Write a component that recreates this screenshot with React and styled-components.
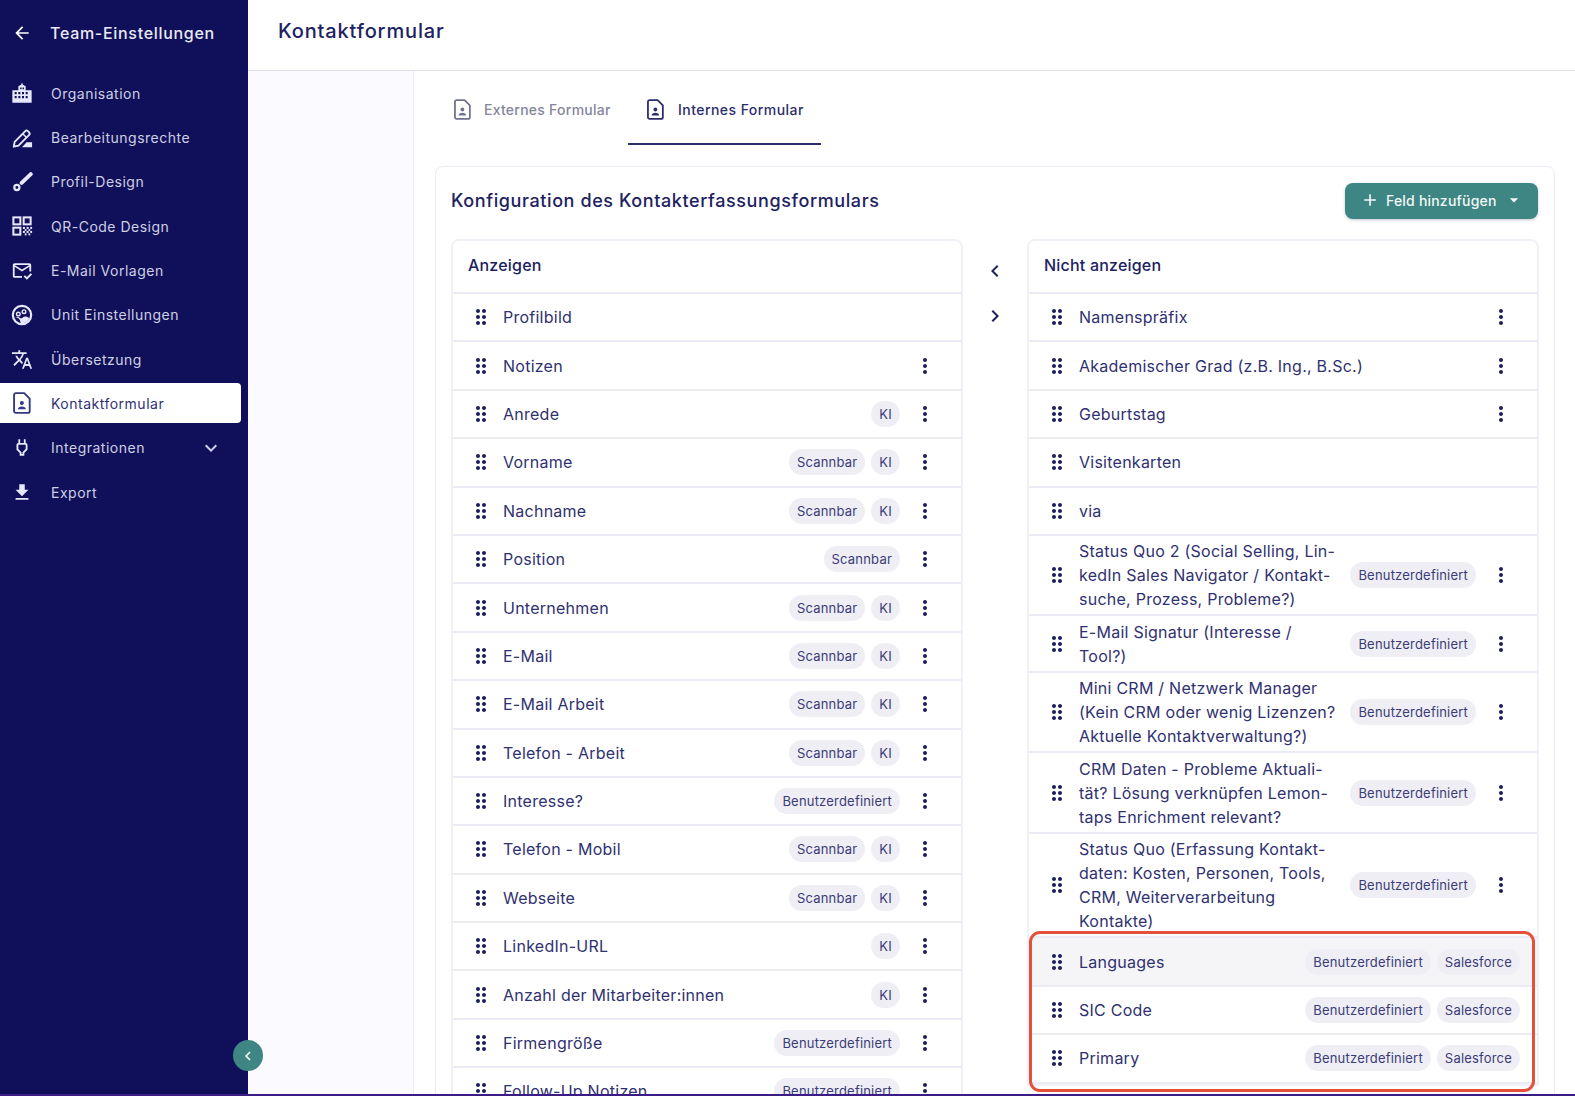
import React from "react";
import styled, { createGlobalStyle } from "styled-components";
import {
  MdArrowBack,
  MdOutlineMarkEmailRead,
  MdTranslate,
  MdOutlinePower,
  MdFileDownload,
  MdKeyboardArrowDown,
  MdChevronLeft,
  MdChevronRight,
  MdDragIndicator,
  MdMoreVert,
  MdAdd,
  MdArrowDropDown,
} from "react-icons/md";

const NAVY = "#10105a";
const INK = "#2c2e6b";
const TEAL = "#3e8683";
const LINE = "#ebebf5";

const GlobalStyle = createGlobalStyle`
  * { box-sizing: border-box; }
  html, body { margin: 0; height: 100%; overflow: hidden; }
  body { font-family: Inter, "Noto Sans", sans-serif; color: ${INK}; background: #fff; }
`;

const ContactDoc = ({ size = 21 }) => (
  <svg width={size} height={size} viewBox="0 0 20 20" fill="none">
    <path
      d="M4.4 1h7.6l5 5v11.4a1.6 1.6 0 0 1-1.6 1.6H4.4a1.6 1.6 0 0 1-1.6-1.6V2.6A1.6 1.6 0 0 1 4.4 1z"
      stroke="currentColor"
      strokeWidth="1.7"
      strokeLinejoin="round"
    />
    <circle cx="9.9" cy="10" r="1.8" fill="currentColor" />
    <path d="M6.3 15.6c0-1.7 1.7-2.5 3.6-2.5s3.6.8 3.6 2.5z" fill="currentColor" />
  </svg>
);

const BuildingIcon = () => (
  <svg width="22" height="22" viewBox="0 0 24 24" fill="currentColor">
    <path
      fillRule="evenodd"
      d="M12 .5l1 2.5 3 1.5V9h6.5v13.5h-21V9H8V4.5L11 3zM10 6v2h1.6V6zm2.6 0v2h1.6V6zM4 11v2.4h2.2V11zm4 0v2.4h2.2V11zm4 0v2.4h2.2V11zm4 0v2.4h2.2V11zM4 15.4v2.4h2.2v-2.4zm4 0v2.4h2.2v-2.4zm4 0v2.4h2.2v-2.4zm4 0v2.4h2.2v-2.4z"
    />
  </svg>
);

const PencilIcon = () => (
  <svg width="22" height="22" viewBox="0 0 24 24" fill="none">
    <path
      d="M3 21.5l1-5.2L15.6 4.4a2 2 0 0 1 2.8 0l1.4 1.4a2 2 0 0 1 0 2.8L8.2 20.4z"
      stroke="currentColor"
      strokeWidth="2"
      strokeLinejoin="round"
    />
    <path d="M12.8 7.4l3.8 3.8" stroke="currentColor" strokeWidth="1.6" />
    <path d="M12 22l5-5.5h6V22z" fill="currentColor" />
  </svg>
);

const BrushIcon = () => (
  <svg width="22" height="22" viewBox="0 0 24 24" fill="none">
    <path d="M21.6 3.4L11.6 13" stroke="currentColor" strokeWidth="4.2" strokeLinecap="round" />
    <circle cx="6.4" cy="18" r="2.8" stroke="currentColor" strokeWidth="2.4" />
  </svg>
);

const QrIcon = () => (
  <svg width="22" height="22" viewBox="0 0 24 24" fill="none">
    <g stroke="currentColor" strokeWidth="2.2">
      <rect x="2.6" y="2.6" width="7.6" height="7.6" />
      <rect x="13.8" y="2.6" width="7.6" height="7.6" />
      <rect x="2.6" y="13.8" width="7.6" height="7.6" />
    </g>
    <g fill="currentColor">
      <rect x="13" y="13" width="2.2" height="2.2" />
      <rect x="17" y="13" width="2.2" height="2.2" />
      <rect x="21" y="13" width="2" height="2.2" />
      <rect x="15" y="15.4" width="2" height="2" />
      <rect x="19" y="15.4" width="2" height="2" />
      <rect x="13" y="17.4" width="2.2" height="2.2" />
      <rect x="17" y="17.4" width="2.2" height="2.2" />
      <rect x="21" y="17.4" width="2" height="2.2" />
      <rect x="15" y="20" width="2" height="2.2" />
      <rect x="19" y="20" width="2" height="2.2" />
    </g>
  </svg>
);

const UnitIcon = () => (
  <svg width="22" height="22" viewBox="0 0 24 24" fill="none">
    <circle cx="12" cy="12" r="10" stroke="currentColor" strokeWidth="2.4" />
    <circle cx="8" cy="11" r="2" stroke="currentColor" strokeWidth="1.5" />
    <circle cx="14.2" cy="8.4" r="2" stroke="currentColor" strokeWidth="1.5" />
    <path d="M4.5 14.5c2.5.4 4 1 5 3l1.5 3.5c4 .4 7.5-1.6 9-5.4-2.4-2-5.4-2.6-7.4-.6-1.2 1.2-2.4.6-3.4-.4-1.4-1-3-1-4.7-.1z" fill="currentColor" />
  </svg>
);

const navItems = [
  { label: "Organisation", icon: <BuildingIcon /> },
  { label: "Bearbeitungsrechte", icon: <PencilIcon /> },
  { label: "Profil-Design", icon: <BrushIcon /> },
  { label: "QR-Code Design", icon: <QrIcon /> },
  { label: "E-Mail Vorlagen", icon: <MdOutlineMarkEmailRead /> },
  { label: "Unit Einstellungen", icon: <UnitIcon /> },
  { label: "Übersetzung", icon: <MdTranslate /> },
  { label: "Kontaktformular", icon: <ContactDoc size={22} />, active: true },
  { label: "Integrationen", icon: <MdOutlinePower />, more: true },
  { label: "Export", icon: <MdFileDownload /> },
];

const S = "Scannbar";
const K = "KI";
const B = "Benutzerdefiniert";
const F = "Salesforce";

const shownFields = [
  { name: "Profilbild", tags: [], menu: false },
  { name: "Notizen", tags: [] },
  { name: "Anrede", tags: [K] },
  { name: "Vorname", tags: [S, K] },
  { name: "Nachname", tags: [S, K] },
  { name: "Position", tags: [S] },
  { name: "Unternehmen", tags: [S, K] },
  { name: "E-Mail", tags: [S, K] },
  { name: "E-Mail Arbeit", tags: [S, K] },
  { name: "Telefon - Arbeit", tags: [S, K] },
  { name: "Interesse?", tags: [B] },
  { name: "Telefon - Mobil", tags: [S, K] },
  { name: "Webseite", tags: [S, K] },
  { name: "LinkedIn-URL", tags: [K] },
  { name: "Anzahl der Mitarbeiter:innen", tags: [K] },
  { name: "Firmengröße", tags: [B] },
  { name: "Follow-Up Notizen", tags: [B] },
];

const hiddenFields = [
  { name: "Namenspräfix", tags: [] },
  { name: "Akademischer Grad (z.B. Ing., B.Sc.)", tags: [] },
  { name: "Geburtstag", tags: [] },
  { name: "Visitenkarten", tags: [], menu: false },
  { name: "via", tags: [], menu: false },
  {
    name: ["Status Quo 2 (Social Selling, Lin-", "kedIn Sales Navigator / Kontakt-", "suche, Prozess, Probleme?)"],
    tags: [B],
  },
  { name: ["E-Mail Signatur (Interesse /", "Tool?)"], tags: [B] },
  {
    name: ["Mini CRM / Netzwerk Manager", "(Kein CRM oder wenig Lizenzen?", "Aktuelle Kontaktverwaltung?)"],
    tags: [B],
  },
  {
    name: ["CRM Daten - Probleme Aktuali-", "tät? Lösung verknüpfen Lemon-", "taps Enrichment relevant?"],
    tags: [B],
  },
  {
    name: ["Status Quo (Erfassung Kontakt-", "daten: Kosten, Personen, Tools,", "CRM, Weiterverarbeitung", "Kontakte)"],
    tags: [B],
  },
];

const salesforceFields = [
  { name: "Languages", tags: [B, F], menu: false, hover: true },
  { name: "SIC Code", tags: [B, F], menu: false },
  { name: "Primary", tags: [B, F], menu: false },
];

const FieldRow = ({ field }) => (
  <Row $hover={field.hover}>
    <Handle>
      <MdDragIndicator />
    </Handle>
    <RowName>
      {Array.isArray(field.name)
        ? field.name.map((line) => <span key={line}>{line}</span>)
        : field.name}
    </RowName>
    {field.tags.map((tag) => (
      <Chip key={tag}>{tag}</Chip>
    ))}
    {field.menu !== false && (
      <Kebab>
        <MdMoreVert />
      </Kebab>
    )}
  </Row>
);

const App = () => {
  return (
    <Page>
      <GlobalStyle />
      <Layout>
        <Sidebar>
          <SideTitle>
            <MdArrowBack />
            <span>Team-Einstellungen</span>
          </SideTitle>
          <Nav>
            {navItems.map((item) => (
              <NavItem key={item.label} $active={item.active}>
                <NavIcon>{item.icon}</NavIcon>
                <NavLabel>{item.label}</NavLabel>
                {item.more && <MdKeyboardArrowDown size={24} />}
              </NavItem>
            ))}
          </Nav>
          <Collapse>
            <MdChevronLeft />
          </Collapse>
        </Sidebar>
        <Main>
          <TopBar>Kontaktformular</TopBar>
          <Body>
            <Gutter />
            <Content>
              <Tabs>
                <Tab>
                  <ContactDoc />
                  Externes Formular
                </Tab>
                <Tab $active>
                  <ContactDoc />
                  Internes Formular
                </Tab>
              </Tabs>
              <Card>
                <CardHead>
                  <CardTitle>Konfiguration des Kontakterfassungsformulars</CardTitle>
                  <AddButton>
                    <MdAdd size={20} />
                    <span>Feld hinzufügen</span>
                    <MdArrowDropDown size={20} />
                  </AddButton>
                </CardHead>
                <Columns>
                  <Panel>
                    <PanelHead>Anzeigen</PanelHead>
                    {shownFields.map((f) => (
                      <FieldRow key={f.name} field={f} />
                    ))}
                  </Panel>
                  <Arrows>
                    <MdChevronLeft />
                    <MdChevronRight />
                  </Arrows>
                  <Panel>
                    <PanelHead>Nicht anzeigen</PanelHead>
                    {hiddenFields.map((f) => (
                      <FieldRow key={String(f.name)} field={f} />
                    ))}
                    <Marked>
                      {salesforceFields.map((f) => (
                        <FieldRow key={f.name} field={f} />
                      ))}
                      <RedFrame />
                    </Marked>
                  </Panel>
                </Columns>
              </Card>
            </Content>
          </Body>
        </Main>
      </Layout>
      <BottomLine />
    </Page>
  );
};

const Page = styled.div`
  height: 1096px;
  display: flex;
  flex-direction: column;
`;
const Layout = styled.div`
  flex: 1;
  min-height: 0;
  display: flex;
`;
const BottomLine = styled.div`
  height: 2px;
  background: #3b1c86;
`;

const Sidebar = styled.aside`
  position: relative;
  width: 248px;
  flex: none;
  background: ${NAVY};
  color: #d9d9e8;
`;
const SideTitle = styled.div`
  height: 66px;
  padding-left: 12px;
  display: flex;
  align-items: center;
  gap: 18px;
  font-size: 16px;
  font-weight: 500;
  letter-spacing: 0.7px;
  color: #e9e9f3;
  svg {
    font-size: 20px;
    color: #fff;
  }
`;
const Nav = styled.nav`
  padding-top: 7.4px;
  display: flex;
  flex-direction: column;
  gap: 4.3px;
`;
const NavItem = styled.div`
  width: 241px;
  height: 40px;
  padding: 0 18px 0 11px;
  display: flex;
  align-items: center;
  gap: 18px;
  font-size: 14px;
  letter-spacing: 0.5px;
  border-radius: 0 4px 4px 0;
  background: ${(p) => (p.$active ? "#fff" : "transparent")};
  color: ${(p) => (p.$active ? "#2f3278" : "#cfcfe2")};
`;
const NavIcon = styled.span`
  width: 22px;
  height: 22px;
  display: flex;
  align-items: center;
  justify-content: center;
  font-size: 23px;
  filter: brightness(1.12);
`;
const NavLabel = styled.span`
  flex: 1;
`;
const Collapse = styled.div`
  position: absolute;
  right: -15px;
  top: 1040px;
  width: 30px;
  height: 31px;
  border-radius: 50%;
  background: ${TEAL};
  color: #fff;
  font-size: 18px;
  display: flex;
  align-items: center;
  justify-content: center;
  z-index: 2;
`;

const Main = styled.main`
  flex: 1;
  min-width: 0;
  display: flex;
  flex-direction: column;
`;
const TopBar = styled.header`
  height: 71px;
  flex: none;
  padding: 0 0 9px 30px;
  display: flex;
  align-items: center;
  font-size: 20px;
  font-weight: 500;
  letter-spacing: 0.85px;
  color: #20215f;
  border-bottom: 1px solid #dfdfea;
`;
const Body = styled.div`
  flex: 1;
  min-height: 0;
  display: flex;
`;
const Gutter = styled.div`
  width: 166px;
  flex: none;
  background: #fbfaff;
  border-right: 1px solid ${LINE};
`;
const Content = styled.div`
  flex: 1;
  min-width: 0;
  padding: 0 20px 0 21px;
  overflow: hidden;
`;
const Tabs = styled.div`
  height: 74px;
  display: flex;
`;
const Tab = styled.div`
  width: 193px;
  padding: 4px 0 0 17px;
  display: flex;
  align-items: center;
  gap: ${(p) => (p.$active ? "12px" : "11px")};
  font-size: 14px;
  font-weight: 500;
  letter-spacing: ${(p) => (p.$active ? "0.45px" : "0.25px")};
  color: ${(p) => (p.$active ? "#2c2e6b" : "#85869a")};
  border-bottom: 2px solid ${(p) => (p.$active ? "#2c2e6b" : "transparent")};
  svg {
    color: ${(p) => (p.$active ? "#2c2e6b" : "#70728e")};
  }
`;
const Card = styled.section`
  margin-top: 21px;
  padding: 16px 16px 0 15px;
  border: 1px solid ${LINE};
  border-radius: 8px 8px 0 0;
  height: 1100px;
`;
const CardHead = styled.div`
  height: 56px;
  display: flex;
  align-items: flex-start;
  justify-content: space-between;
`;
const CardTitle = styled.h2`
  margin: 8px 0 0;
  font-size: 18px;
  line-height: 20px;
  font-weight: 500;
  letter-spacing: 0.6px;
  color: #20215f;
`;
const AddButton = styled.button`
  width: 193px;
  height: 36px;
  border: 0;
  border-radius: 8px;
  padding: 0 14px 2px 15px;
  display: flex;
  align-items: center;
  gap: 6px;
  background: ${TEAL};
  color: #f2f8f7;
  font: 500 14px Inter, sans-serif;
  letter-spacing: 0.2px;
  box-shadow: 0 1px 3px rgba(20, 30, 80, 0.25);
  span {
    flex: 1;
    text-align: left;
    white-space: nowrap;
  }
`;
const Columns = styled.div`
  display: grid;
  grid-template-columns: 512px 64px 512px;
  align-items: start;
`;
const Panel = styled.div`
  border: 2px solid #f0f0f7;
  border-radius: 8px 8px 0 0;
`;
const PanelHead = styled.div`
  height: 53px;
  padding: 0 0 3px 15px;
  display: flex;
  align-items: center;
  font-size: 16px;
  font-weight: 500;
  letter-spacing: 0.2px;
  color: #20215f;
  border-bottom: 2px solid ${LINE};
`;
const Arrows = styled.div`
  padding-top: 20px;
  display: flex;
  flex-direction: column;
  align-items: center;
  gap: 21px;
  font-size: 24px;
  color: #20215f;
  svg {
    display: block;
  }
`;
const Row = styled.div`
  min-height: 48.4px;
  padding: 3.25px 17px 3.25px 16px;
  display: flex;
  align-items: center;
  gap: 6px;
  background: ${(p) => (p.$hover ? "#f5f5f8" : "#fff")};
  border-bottom: 2px solid ${LINE};
`;
const Handle = styled.span`
  width: 24px;
  flex: none;
  margin-right: 4px;
  display: flex;
  justify-content: center;
  font-size: 26px;
  color: #1d1e5c;
`;
const RowName = styled.div`
  flex: 1;
  min-width: 0;
  display: flex;
  flex-direction: column;
  font-size: 16px;
  line-height: 24px;
  letter-spacing: 0.25px;
  white-space: nowrap;
  color: #2f3170;
`;
const Chip = styled.span`
  height: 26px;
  padding: 0 8px;
  display: flex;
  align-items: center;
  border-radius: 13px;
  background: #eeeef4;
  font-size: 13px;
  letter-spacing: 0.2px;
  color: #3a3c78;
  white-space: nowrap;
`;
const Kebab = styled.span`
  width: 38px;
  flex: none;
  display: flex;
  justify-content: center;
  font-size: 24px;
  color: #1d1e5c;
`;
const Marked = styled.div`
  position: relative;
`;
const RedFrame = styled.div`
  position: absolute;
  inset: -7px 2px -8px 0;
  border: 3px solid #e5503a;
  border-radius: 11px;
  pointer-events: none;
`;

export default App;
